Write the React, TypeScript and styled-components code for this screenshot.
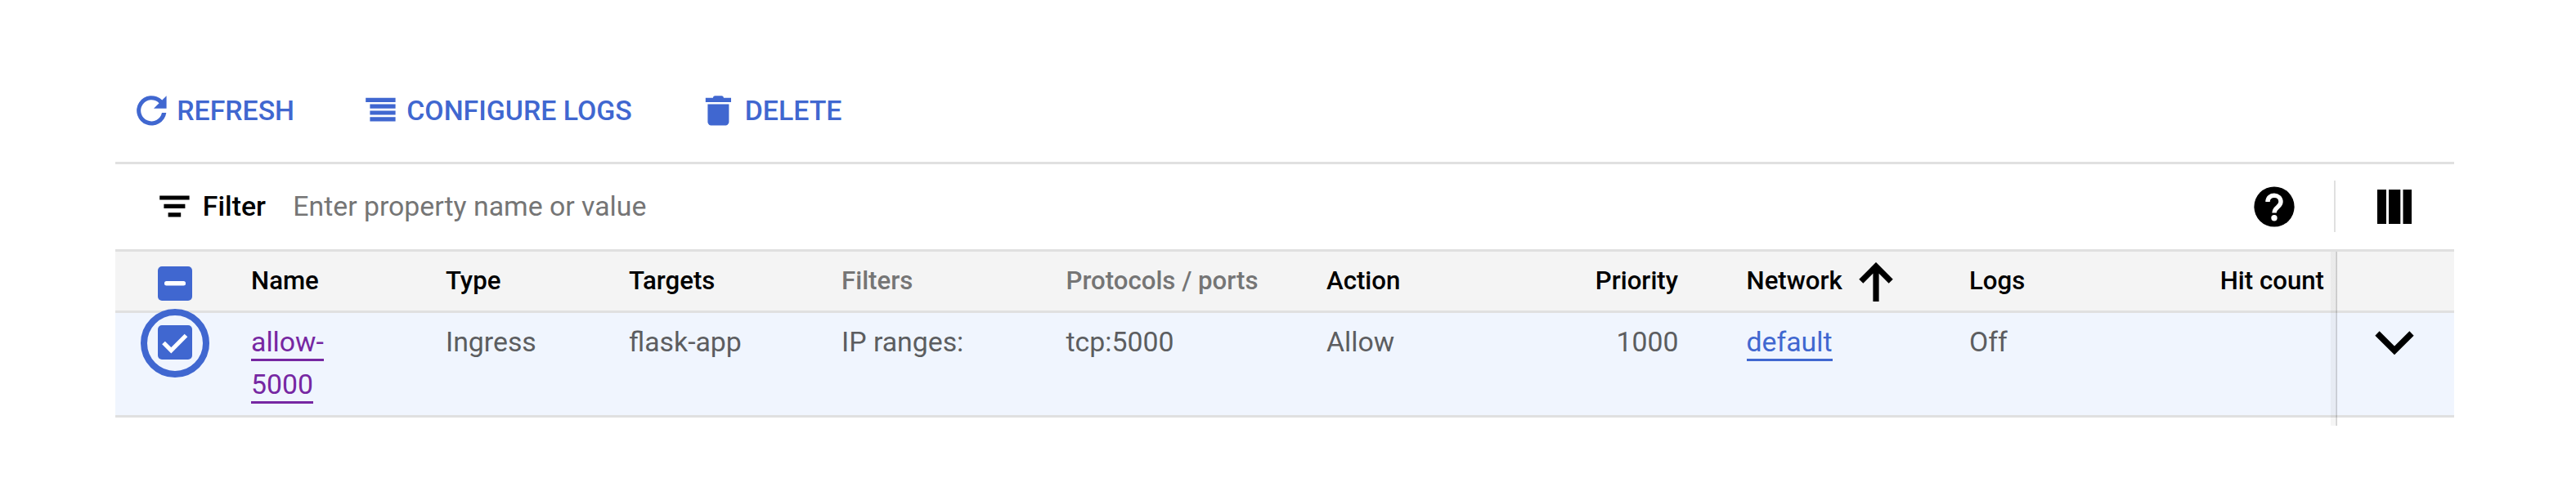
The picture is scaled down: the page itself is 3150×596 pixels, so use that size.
import React from 'react';
import styled, { createGlobalStyle } from 'styled-components';

const blue = '#4067d0';
const line = '#e0e0e0';

const GlobalStyle = createGlobalStyle`
  * { box-sizing: border-box; }
  body { margin: 0; background: #fff; font-family: Roboto, "Liberation Sans", sans-serif; }
  svg { display: block; flex: none; }
`;

const Page = styled.main`
  width: 3150px;
  height: 596px;
  padding: 72px 149px 0 141px;
  background: #fff;
  overflow: hidden;
`;

const Toolbar = styled.div`
  display: flex;
  height: 126px;
  padding: 0 0 0 21px;
`;

const ToolButton = styled.button<{ $width: number; $gap: number }>`
  display: flex;
  align-items: center;
  flex: none;
  width: ${(p) => p.$width}px;
  height: 127px;
  gap: ${(p) => p.$gap}px;
  padding: 0;
  border: 0;
  background: none;
  color: ${blue};
  font: 500 33.8px/52px Roboto, "Liberation Sans", sans-serif;
  white-space: nowrap;
`;

const FilterBar = styled.div`
  display: flex;
  align-items: center;
  height: 107px;
  border-top: 3px solid ${line};
  padding: 0 0 1px 49px;
`;

const FilterLabel = styled.span`
  margin-left: 11px;
  width: 110.5px;
  font: 500 33.8px/52px Roboto, sans-serif;
  color: #000;
`;

const FilterInput = styled.input`
  flex: 1;
  border: 0;
  padding: 0;
  outline: 0;
  background: none;
  font: 400 33.8px/52px Roboto, sans-serif;
  color: #757575;
  &::placeholder { color: #757575; opacity: 1; }
`;

const Separator = styled.div`
  width: 2px;
  height: 63px;
  margin: 0 51px 0 48px;
  background: ${line};
`;

const ColumnsSlot = styled.div`
  width: 94px;
`;

const Table = styled.div`
  position: relative;
`;

const columns = '166px 238px 224px 260px 274.5px 318.5px 231px 282.5px 272.5px 233px 217px 143px';

const HeaderRow = styled.div`
  display: grid;
  grid-template-columns: ${columns};
  height: 78px;
  border-top: 3px solid ${line};
  border-bottom: 3px solid ${line};
  background: #f4f4f4;
`;

const HeadCell = styled.div<{ $muted?: boolean; $endPad?: number }>`
  display: flex;
  justify-content: ${(p) => (p.$endPad ? 'flex-end' : 'flex-start')};
  padding-right: ${(p) => p.$endPad ?? 0}px;
  height: 72px;
  font: 500 31.2px/72px Roboto, sans-serif;
  color: ${(p) => (p.$muted ? '#757575' : '#000')};
  white-space: nowrap;
`;

const SortArrow = styled.svg`
  margin: 13px 0 0 20px;
`;

const Row = styled.div`
  display: grid;
  grid-template-columns: ${columns};
  height: 128px;
  padding-top: 9px;
  border-bottom: 3px solid ${line};
  background: #f0f5fe;
`;

const Cell = styled.div<{ $endPad?: number }>`
  padding: 1px ${(p) => p.$endPad ?? 0}px 0 0;
  font: 400 33.8px/52px Roboto, sans-serif;
  color: #5c5d60;
  text-align: ${(p) => (p.$endPad ? 'right' : 'left')};
`;

const Link = styled.a<{ $visited?: boolean }>`
  color: ${(p) => (p.$visited ? '#7627a2' : blue)};
  padding-bottom: 1px;
  border-bottom: 3px solid currentColor;
  box-decoration-break: clone;
  -webkit-box-decoration-break: clone;
`;

const NameCell = styled(Cell)`
  width: 110px;
`;

const CheckSlot = styled.div<{ $top: number }>`
  position: relative;
  padding: ${(p) => p.$top}px 0 0 52px;
`;

const FocusRing = styled.div`
  position: absolute;
  left: 31px;
  top: -14px;
  width: 84px;
  height: 84px;
  border: 8px solid ${blue};
  border-radius: 50%;
  background: #f0f5fe;
`;

const CheckSvg = styled.svg`
  position: relative;
`;

const ExpandSlot = styled.div`
  padding: 13px 0 0 46px;
`;

const StickyShadow = styled.div`
  position: absolute;
  left: 2709px;
  top: 3px;
  width: 8px;
  height: 213px;
  background: linear-gradient(to right, rgba(0, 0, 0, 0.04) 0 6px, rgba(0, 0, 0, 0.13) 6px 7px, rgba(0, 0, 0, 0.18) 7px 8px);
`;

const ICON = 46.8;

const RefreshIcon = () => (
  <svg width={ICON} height={ICON} viewBox="0 0 18 18" fill="currentColor">
    <path d="M13.95 4.05A7 7 0 1 0 15.9 10h-2.06A5.02 5.02 0 1 1 12.52 5.48L10 8h6V2z" />
  </svg>
);

const LogsIcon = () => (
  <svg width={ICON} height={ICON} viewBox="0 0 18 18" fill="currentColor">
    <path d="M2 3h14v2H2zM4 6h12v2H4zM4 9h12v2H4zM4 12h12v2H4z" />
  </svg>
);

const TrashIcon = () => (
  <svg width={ICON} height={ICON} viewBox="0 0 18 18" fill="currentColor">
    <path d="M3 3h3.5c0-.6.4-1 1-1h3c.6 0 1 .4 1 1H15v2H3zM4 6h10v8.2c0 1-.8 1.8-1.8 1.8H5.8c-1 0-1.8-.8-1.8-1.8z" />
  </svg>
);

const FilterIcon = () => (
  <svg width={ICON} height={ICON} viewBox="0 0 18 18">
    <path d="M2 4h14v2H2zM4 8h10v2H4zM6 12h6v2H6z" />
  </svg>
);

const HelpIcon = () => (
  <svg width="50" height="50" viewBox="0 0 50 50">
    <circle cx="25" cy="25" r="24.6" />
    <path d="M17 19C17 8.5 33 9 33 19C33 25.5 25 25.5 25 32.5" fill="none" stroke="#fff" strokeWidth="5.4" />
    <circle cx="25" cy="38.7" r="3.7" fill="#fff" />
  </svg>
);

const ColumnsIcon = () => (
  <svg width="42" height="42" viewBox="0 0 42 42">
    <path d="M0 0h11v42H0zM14 0h14.3v42H14zM31.5 0H42v42H31.5z" />
  </svg>
);

const toolActions = [
  { label: 'REFRESH', icon: <RefreshIcon />, width: 280, gap: 7.5 },
  { label: 'CONFIGURE LOGS', icon: <LogsIcon />, width: 413, gap: 8.5 },
  { label: 'DELETE', icon: <TrashIcon />, width: 200, gap: 9 },
];

export default function App() {
  return (
    <Page>
      <GlobalStyle />
      <Toolbar>
        {toolActions.map((a) => (
          <ToolButton key={a.label} $width={a.width} $gap={a.gap}>
            {a.icon}
            {a.label}
          </ToolButton>
        ))}
      </Toolbar>
      <FilterBar>
        <FilterIcon />
        <FilterLabel>Filter</FilterLabel>
        <FilterInput placeholder="Enter property name or value" />
        <HelpIcon />
        <Separator />
        <ColumnsSlot>
          <ColumnsIcon />
        </ColumnsSlot>
      </FilterBar>
      <Table>
        <HeaderRow>
          <CheckSlot $top={18}>
            <CheckSvg width="42" height="42" viewBox="0 0 42 42">
              <rect width="42" height="42" rx="5" fill={blue} />
              <rect x="8" y="18" width="26" height="5.5" rx="2.5" fill="#fff" />
            </CheckSvg>
          </CheckSlot>
          <HeadCell>Name</HeadCell>
          <HeadCell>Type</HeadCell>
          <HeadCell>Targets</HeadCell>
          <HeadCell $muted>Filters</HeadCell>
          <HeadCell $muted>Protocols / ports</HeadCell>
          <HeadCell>Action</HeadCell>
          <HeadCell $endPad={83.5}>Priority</HeadCell>
          <HeadCell>
            Network
            <SortArrow width="42" height="48" viewBox="0 0 42 48">
              <path d="M21 48V5M2.8 23.2 21 5 39.2 23.2" fill="none" stroke="#000" strokeWidth="7.2" />
            </SortArrow>
          </HeadCell>
          <HeadCell>Logs</HeadCell>
          <HeadCell $endPad={16}>Hit count</HeadCell>
          <HeadCell />
        </HeaderRow>
        <Row>
          <CheckSlot $top={6}>
            <FocusRing />
            <CheckSvg width="42" height="42" viewBox="0 0 42 42">
              <rect width="42" height="42" rx="5" fill={blue} />
              <path d="M7 21.5 16.3 30.8 34.5 12.5" fill="none" stroke="#fff" strokeWidth="5.2" />
            </CheckSvg>
          </CheckSlot>
          <NameCell>
            <Link $visited>allow-5000</Link>
          </NameCell>
          <Cell>Ingress</Cell>
          <Cell>flask-app</Cell>
          <Cell>IP ranges:</Cell>
          <Cell>tcp:5000</Cell>
          <Cell>Allow</Cell>
          <Cell $endPad={83}>1000</Cell>
          <Cell>
            <Link>default</Link>
          </Cell>
          <Cell>Off</Cell>
          <Cell />
          <ExpandSlot>
            <svg width="48" height="30" viewBox="0 0 48 30">
              <path d="M3 3 24 24 45 3" fill="none" stroke="#000" strokeWidth="7.5" />
            </svg>
          </ExpandSlot>
        </Row>
        <StickyShadow />
      </Table>
    </Page>
  );
}
